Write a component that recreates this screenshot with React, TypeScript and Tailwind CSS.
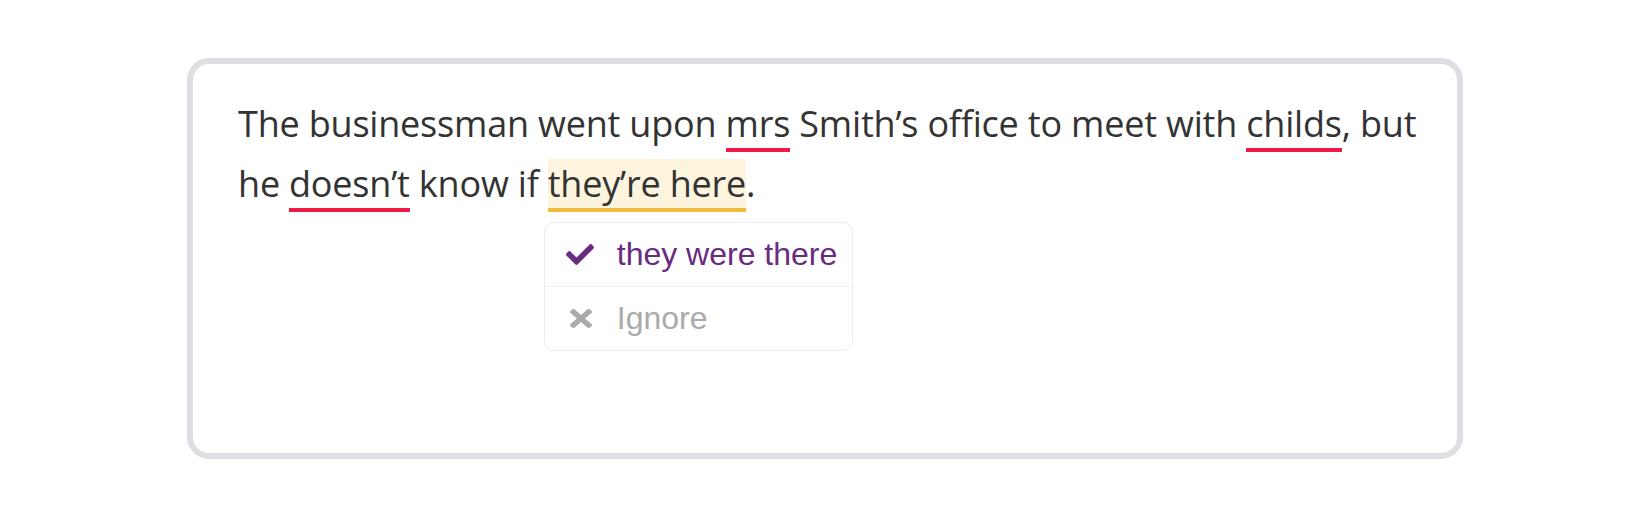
import React from "react"

function CheckIcon() {
  return (
    <svg width="28" height="21" viewBox="0 64 512 384" fill="currentColor">
      <path d="M173.898 439.404l-166.4-166.4c-9.997-9.997-9.997-26.206 0-36.204l36.203-36.204c9.997-9.998 26.207-9.998 36.204 0L192 312.69 432.095 72.596c9.997-9.997 26.207-9.997 36.204 0l36.203 36.204c9.997 9.997 9.997 26.206 0 36.204l-294.4 294.401c-9.998 9.997-26.207 9.997-36.204-.001z" />
    </svg>
  )
}

function TimesIcon() {
  return (
    <svg width="22" height="19" viewBox="0 80 352 352" preserveAspectRatio="none" fill="currentColor">
      <path d="M242.72 256l100.07-100.07c12.28-12.28 12.28-32.19 0-44.48l-22.24-22.24c-12.28-12.28-32.19-12.28-44.48 0L176 189.28 75.93 89.21c-12.28-12.28-32.19-12.28-44.48 0L9.21 111.45c-12.28 12.28-12.28 32.19 0 44.48L109.28 256 9.21 356.07c-12.28 12.28-12.28 32.19 0 44.48l22.24 22.24c12.28 12.28 32.2 12.28 44.48 0L176 322.72l100.07 100.07c12.28 12.28 32.2 12.28 44.48 0l22.24-22.24c12.28-12.28 12.28-32.19 0-44.48L242.72 256z" />
    </svg>
  )
}

function Mistake({ children }: { children: React.ReactNode }) {
  return <span className="border-b-4 border-[#ee1a45]">{children}</span>
}

function SuggestionMenu() {
  return (
    <div
      className="absolute left-[-4px] top-[63px] z-10 w-[309px] rounded-[10px] border border-[#ececec] bg-white tracking-normal"
      style={{ fontFamily: '"Liberation Sans", Arial, sans-serif' }}
    >
      <div className="flex h-[64px] items-center border-b border-[#efefef] text-[32px] leading-none text-[#682b80]">
        <span className="ml-[21px] flex w-[51px]">
          <CheckIcon />
        </span>
        <span className="mt-[-2px]">they were there</span>
      </div>
      <div className="flex h-[63px] items-center text-[32px] leading-none text-[#aaaaaa]">
        <span className="ml-[25px] flex w-[47px]">
          <TimesIcon />
        </span>
        <span className="mt-[-2px]">Ignore</span>
      </div>
    </div>
  )
}

export default function App() {
  return (
    <div className="flex w-full justify-center bg-white pt-[58px]">
      <div className="h-[401px] w-[1276px] rounded-[22px] border-[6px] border-[#dedee3] bg-white px-[45px] pt-[30px]">
        <p
          className="whitespace-nowrap text-[36px] leading-[60px] tracking-[-0.2px] text-[#333333]"
          style={{ fontFamily: '"Open Sans", sans-serif' }}
        >
          The businessman went upon <Mistake>mrs</Mistake> Smith’s office to meet with <Mistake>childs</Mistake>, but
          <br />
          he <Mistake>doesn’t</Mistake> know if{" "}
          <span className="relative border-b-4 border-[#f1bb3e] bg-[#fdf4de]">
            they’re here
            <SuggestionMenu />
          </span>
          .
        </p>
      </div>
    </div>
  )
}
